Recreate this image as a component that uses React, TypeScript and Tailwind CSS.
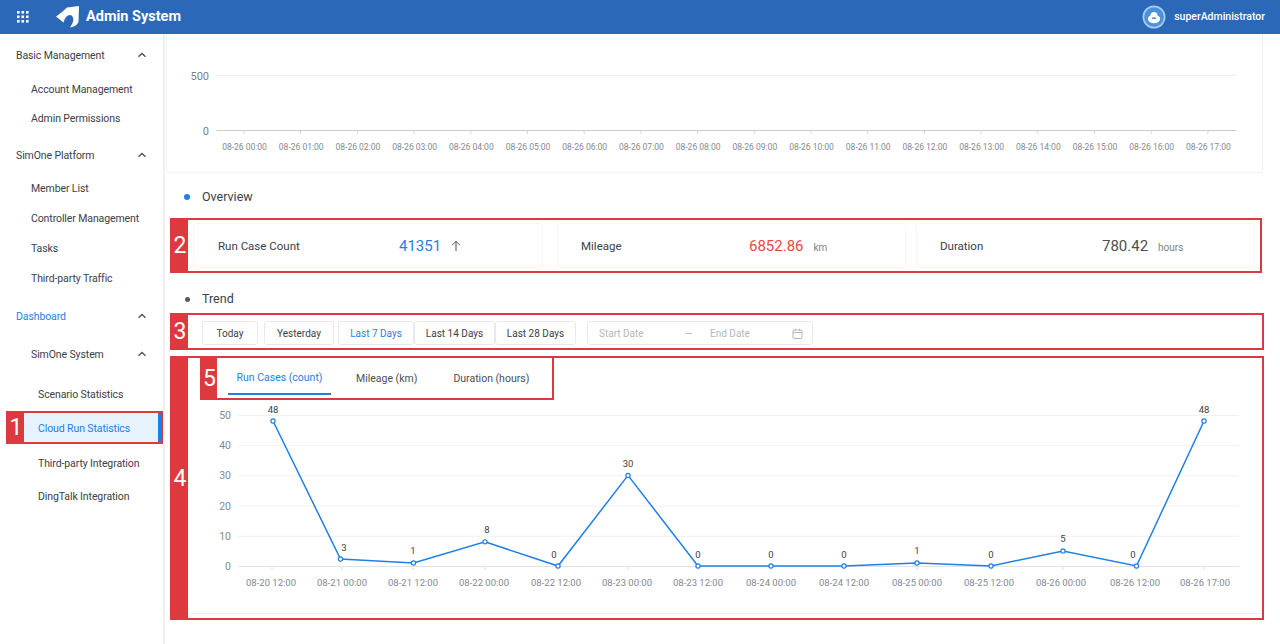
import React from "react";

const font = { fontFamily: 'Roboto, "Noto Sans", sans-serif' };

function Chevron({ className = "" }: { className?: string }) {
  return (
    <svg width="10" height="6" viewBox="0 0 10 6" fill="none" className={className}>
      <path d="M1.5 4.8 5 1.5l3.5 3.3" stroke="#4b4f57" strokeWidth="1.3" />
    </svg>
  );
}

function Tab({ n, className }: { n: string; className: string }) {
  return (
    <div className={`shrink-0 bg-[#dd3a40] text-white flex items-center justify-center text-[23px] leading-none font-normal ${className}`}>
      {n}
    </div>
  );
}

function SideRow({ label, h, pl, chevron, blue }: { label: string; h: string; pl: string; chevron?: boolean; blue?: boolean }) {
  return (
    <div className={`flex items-center justify-between whitespace-nowrap pr-[16px] text-[10.5px] tracking-[-0.1px] ${h} ${pl} ${blue ? "text-[#1f7fe6]" : "text-[#3c4048]"}`}>
      <span className="pt-[2px]">{label}</span>
      {chevron && <Chevron />}
    </div>
  );
}

function Sidebar() {
  return (
    <aside className="w-[165px] shrink-0 border-r-2 border-[#f0f0f0] bg-white h-[610px]">
      <SideRow label="Basic Management" h="h-[42px]" pl="pl-[16px]" chevron />
      <SideRow label="Account Management" h="h-[26px]" pl="pl-[31px]" />
      <SideRow label="Admin Permissions" h="h-[32px]" pl="pl-[31px]" />
      <SideRow label="SimOne Platform" h="h-[42px]" pl="pl-[16px]" chevron />
      <SideRow label="Member List" h="h-[24px]" pl="pl-[31px]" />
      <SideRow label="Controller Management" h="h-[36px]" pl="pl-[31px]" />
      <SideRow label="Tasks" h="h-[24px]" pl="pl-[31px]" />
      <SideRow label="Third-party Traffic" h="h-[36px]" pl="pl-[31px]" />
      <SideRow label="Dashboard" h="h-[40px]" pl="pl-[16px]" chevron blue />
      <SideRow label="SimOne System" h="h-[36px]" pl="pl-[31px]" chevron />
      <div className="mt-[6px] mb-[2px]">
        <SideRow label="Scenario Statistics" h="h-[31px]" pl="pl-[38px]" />
      </div>
      <div className="ml-[6px] w-[157px] h-[33px] flex border-2 border-[#dd3a40]">
        <Tab n="1" className="w-[16px]" />
        <div className="flex-1 flex items-center pl-[14px] pt-[2px] bg-[#e6f2fc] border-r-[3px] border-[#1f7fe6] text-[10.5px] tracking-[-0.1px] text-[#1f7fe6]">
          Cloud Run Statistics
        </div>
      </div>
      <SideRow label="Third-party Integration" h="h-[38px]" pl="pl-[38px]" />
      <SideRow label="DingTalk Integration" h="h-[28px]" pl="pl-[38px]" />
    </aside>
  );
}

function TopChart() {
  const labels = Array.from({ length: 18 }, (_, i) => `08-26 ${String(i).padStart(2, "0")}:00`);
  const x0 = 216.5;
  const x1 = 1236.5;
  const step = 56.7;
  return (
    <svg width="1095" height="138" viewBox="167 34 1095 138" className="block" style={font}>
      <line x1={x0} x2={x1} y1="75.5" y2="75.5" stroke="#ececec" />
      <line x1={x0} x2={x1} y1="130.5" y2="130.5" stroke="#c9ccd2" />
      <text x="209" y="80" fontSize="11" fill="#7b7f86" textAnchor="end">500</text>
      <text x="209" y="134.5" fontSize="11" fill="#7b7f86" textAnchor="end">0</text>
      {labels.map((l, i) => (
        <g key={l}>
          <line x1={244 + i * step} x2={244 + i * step} y1="131" y2="134" stroke="#d5d7db" />
          <text x={244.5 + i * step} y="149.5" fontSize="8.5" fill="#85898f" textAnchor="middle">{l}</text>
        </g>
      ))}
    </svg>
  );
}

function Stat({ label, value, unit, valueClass, labelW, widthClass, arrow }: { label: string; value: string; unit?: string; valueClass: string; labelW: string; widthClass: string; arrow?: boolean }) {
  return (
    <div className={`h-[45px] pt-[1px] flex items-center rounded-sm border border-[#f6f6f6] shadow-[0_1px_2px_rgba(0,0,0,0.02)] text-[11.5px] text-[#3c4048] ${widthClass}`}>
      <span className={`pt-[1px] ${labelW}`}>{label}</span>
      <span className={`text-[15px] ${valueClass}`}>{value}</span>
      {unit && <span className="ml-[10px] mt-[3px] text-[10px] text-[#7b7f86]">{unit}</span>}
      {arrow && (
        <svg width="10" height="12" viewBox="0 0 10 12" fill="none" className="ml-[10px]">
          <path d="M5 11V1.5M1.3 5 5 1.3 8.7 5" stroke="#4b4f57" strokeWidth="1" />
        </svg>
      )}
    </div>
  );
}

function Btn({ children, w, active }: { children: string; w: string; active?: boolean }) {
  return (
    <div className={`h-[24px] pt-[1px] flex items-center justify-center rounded-[3px] border border-[#e8e9eb] text-[10px] ${w} ${active ? "text-[#1f7fe6]" : "text-[#3c4048]"}`}>
      {children}
    </div>
  );
}

function TrendChart() {
  const vals = [48, 2.3, 1, 8, 0, 30, 0, 0, 0, 1, 0, 5, 0, 48];
  const shown = ["48", "3", "1", "8", "0", "30", "0", "0", "0", "1", "0", "5", "0", "48"];
  const names = ["08-20 12:00", "08-21 00:00", "08-21 12:00", "08-22 00:00", "08-22 12:00", "08-23 00:00", "08-23 12:00", "08-24 00:00", "08-24 12:00", "08-25 00:00", "08-25 12:00", "08-26 00:00", "08-26 12:00", "08-26 17:00"];
  const xs = [273, 340.5, 413.5, 485, 558, 628, 698, 771, 844, 917, 991, 1063, 1136.5, 1204];
  const ticks = [272, 342, 413, 485, 558, 628, 698, 771, 844, 917, 991, 1063, 1136, 1204];
  const labelX = [271, 342, 413, 484, 556, 627, 698, 771, 844, 917, 989, 1061, 1135, 1205];
  const textX = [273, 344, 413, 487, 554, 628, 698, 771, 844, 917, 991, 1063, 1133, 1204];
  const y = (v: number) => 566 - v * 3.02;
  const pts = vals.map((v, i) => `${xs[i]},${y(v)}`).join(" ");
  return (
    <svg width="1072" height="213" viewBox="188 400 1072 213" className="block" style={font}>
      {[50, 40, 30, 20, 10].map((t) => (
        <line key={t} x1="238" x2="1239" y1={y(t) + 0.5} y2={y(t) + 0.5} stroke="#f0f1f3" />
      ))}
      <line x1="238" x2="1239" y1="566.5" y2="566.5" stroke="#dfe2e7" />
      {ticks.map((t) => (
        <line key={t} x1={t} x2={t} y1="567" y2="570" stroke="#dfe2e7" />
      ))}
      {[50, 40, 30, 20, 10, 0].map((t) => (
        <text key={t} x="231" y={y(t) + 4} fontSize="10.5" fill="#85898f" textAnchor="end">{t}</text>
      ))}
      {names.map((n, i) => (
        <text key={n} x={labelX[i]} y="586" fontSize="9.5" fill="#85898f" textAnchor="middle">{n}</text>
      ))}
      <polyline points={pts} fill="none" stroke="#1f7fe6" strokeWidth="1.5" />
      {vals.map((v, i) => (
        <circle key={i} cx={xs[i]} cy={y(v)} r="2.1" fill="#fff" stroke="#1f7fe6" strokeWidth="1.2" />
      ))}
      {shown.map((s, i) => (
        <text key={i} x={textX[i]} y={y(vals[i]) - 8.5} fontSize="9.5" fill="#3c4048" textAnchor="middle">{s}</text>
      ))}
    </svg>
  );
}

export default function App() {
  return (
    <div className="w-[1280px] h-[644px] overflow-hidden bg-white" style={font}>
      <header className="h-[34px] bg-[#2b68b8] flex items-center text-white">
        <svg width="12" height="12" viewBox="0 0 12 12" className="ml-[17px]" fill="#fff">
          {[0, 4.5, 9].flatMap((a) => [0, 4.5, 9].map((b) => <rect key={`${a}-${b}`} x={a} y={b} width="2.6" height="2.6" />))}
        </svg>
        <svg width="24" height="22" viewBox="0 0 24 22" className="ml-[27px]" fill="#fff">
          <path d="M11 1.5 23 0 22.5 16Q20.5 20.5 14 21.5 18.5 15 17 11.5 15.5 8 12 9.5 9 11 7.5 16.5L0 10.5Q6 6.5 11 1.5Z" />
        </svg>
        <span className="ml-[6px] text-[14.5px] font-bold">Admin System</span>
        <div className="ml-auto mr-[15px] flex items-center">
          <svg width="24" height="24" viewBox="0 0 24 24" className="mr-[8px]">
            <circle cx="12" cy="12" r="11.5" fill="#a8cbee" />
            <circle cx="12" cy="12" r="9.8" fill="#4b92dc" />
            <ellipse cx="12" cy="14" rx="6.2" ry="4.2" fill="#fff" />
            <circle cx="12" cy="10.5" r="3.5" fill="#fff" />
            <rect x="10" y="12.5" width="4" height="1.3" rx="0.6" fill="#2b68b8" />
          </svg>
          <span className="text-[10.5px] font-medium">superAdministrator</span>
        </div>
      </header>
      <div className="flex">
        <Sidebar />
        <main className="flex-1 min-w-0 pl-[1px]">
          <section className="h-[139px] w-[1097px] border-x border-b border-[#f3f3f3] rounded-b-[3px] shadow-[0_1px_2px_rgba(0,0,0,0.02)]">
            <TopChart />
          </section>
          <div className="h-[45px] pt-[3px] flex items-center pl-[18px] text-[12.5px] text-[#3c4048]">
            <span className="w-[6px] h-[6px] rounded-full bg-[#1f7fe6] mr-[12px]" />
            Overview
          </div>
          <div className="ml-[4px] w-[1092px] h-[55px] flex border-2 border-[#dd3a40]">
            <Tab n="2" className="w-[16px]" />
            <div className="flex-1 flex items-center pl-[5px]">
              <Stat label="Run Case Count" value="41351" labelW="w-[205px] pl-[24px]" valueClass="text-[#1f7fe6]" widthClass="w-[350px]" arrow />
              <Stat label="Mileage" value="6852.86" unit="km" labelW="w-[191px] pl-[23px]" valueClass="text-[#e8493f]" widthClass="w-[349px] ml-[14px]" />
              <Stat label="Duration" value="780.42" unit="hours" labelW="w-[185px] pl-[23px]" valueClass="text-[#4b4f57]" widthClass="w-[339px] ml-[10px]" />
            </div>
          </div>
          <div className="h-[40px] pt-[12px] flex items-center pl-[19px] text-[12.5px] text-[#3c4048]">
            <span className="w-[5px] h-[5px] rounded-full bg-[#555a62] mr-[12px]" />
            Trend
          </div>
          <div className="ml-[4px] w-[1094px] h-[37px] flex border-2 border-[#dd3a40]">
            <Tab n="3" className="w-[16px]" />
            <div className="flex-1 flex items-center pl-[14px] pt-[3px]">
              <Btn w="w-[56px]">Today</Btn>
              <Btn w="w-[70px] ml-[6px]">Yesterday</Btn>
              <Btn w="w-[76px] ml-[4px]" active>Last 7 Days</Btn>
              <Btn w="w-[81px]">Last 14 Days</Btn>
              <Btn w="w-[81px]">Last 28 Days</Btn>
              <div className="ml-[11px] w-[226px] h-[24px] pt-[1px] flex items-center rounded-[3px] border border-[#e8e9eb] pl-[11px] pr-[9px] text-[10px] text-[#b4b7bd]">
                <span className="w-[86px]">Start Date</span>
                <span className="w-[25px]">—</span>
                <span>End Date</span>
                <svg width="11" height="11" viewBox="0 0 11 11" fill="none" stroke="#b4b7bd" className="ml-auto">
                  <rect x="1" y="2" width="9" height="8.5" rx="1" />
                  <path d="M1 4.5h9M3.5.8v2M7.5.8v2" />
                </svg>
              </div>
            </div>
          </div>
          <div className="ml-[4px] mt-[6px] w-[1094px] h-[264px] flex border-2 border-[#dd3a40]">
            <Tab n="4" className="w-[16px] pb-[20px]" />
            <div className="flex-1 min-w-0">
              <div className="ml-[12px] -mt-[2px] w-[354px] h-[44px] flex border-2 border-[#dd3a40]">
                <Tab n="5" className="w-[15px]" />
                <div className="flex-1 flex text-[10.5px] text-[#4b4f57] pl-[11px]">
                  <div className="w-[103px] h-[37px] pt-[4px] flex items-center justify-center border-b-2 border-[#1f7fe6] text-[#1f7fe6]">Run Cases (count)</div>
                  <div className="h-[37px] pt-[4px] flex items-center ml-[25px]">Mileage (km)</div>
                  <div className="h-[37px] pt-[4px] flex items-center ml-[36px]">Duration (hours)</div>
                </div>
              </div>
              <div className="border-b border-[#f1f1f1]">
                <TrendChart />
              </div>
            </div>
          </div>
        </main>
      </div>
    </div>
  );
}
